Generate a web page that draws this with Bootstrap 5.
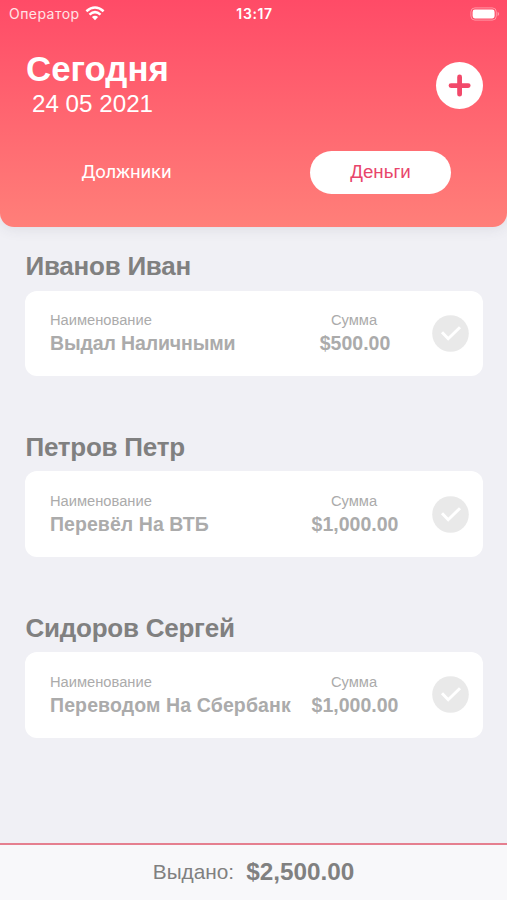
<!DOCTYPE html>
<html lang="ru">
<head>
<meta charset="utf-8">
<meta name="viewport" content="width=device-width, initial-scale=1">
<title>Деньги</title>
<link href="https://cdn.jsdelivr.net/npm/bootstrap@5.3.0/dist/css/bootstrap.min.css" rel="stylesheet">
<style>
body{font-family:"Liberation Sans",Arial,sans-serif;background:#f0f0f5;height:900px;overflow:hidden;line-height:1}
.hero{height:227px;background:linear-gradient(#ff4b67,#ff7f79);border-radius:0 0 14px 14px;box-shadow:0 2px 14px rgba(60,60,80,.1)}
.status{height:27px;padding:0 7px 0 9px;font-family:Inter,sans-serif;font-size:14px}
.status>*{flex:1 1 0}
.carrier{color:#ffe3e6;letter-spacing:.45px}
.clock{font-weight:600;font-size:14px;letter-spacing:.6px}
.heading{height:96px;padding:24px 24px 0 26px}
.today{font-size:34.8px;font-weight:700;line-height:36px}
.date{font-size:24.2px;line-height:34px;padding-left:6px}
.add{width:47px;height:47px;margin-top:11px}
.tabs{padding:28px 56px 0 25px}
.tab{height:43px;font-size:19px;border-radius:22px;color:#fff}
.tab-debt{width:203px;font-family:Roboto,sans-serif;font-size:18.5px;letter-spacing:-.15px}
.tab-money{width:141px;background:#fff;color:#e8456b;font-size:18.7px;padding-bottom:1px}
.entries{padding:25px 24px 0 25px}
.entry{height:180.8px}
.person{font-size:26px;font-weight:700;color:#808080;line-height:28px;margin:0 0 10.6px;padding-left:.5px;letter-spacing:-.24px}
.record{height:85.5px;border:0;border-radius:12px;padding:0 14px 0 25px;color:#ababab}
.caption-line{font-size:14.7px;line-height:19px;padding-top:1px}
.value-line{font-size:19.5px;font-weight:700;line-height:26px;white-space:nowrap}
.v1{letter-spacing:-.12px}
.v2{letter-spacing:.06px}
.v3{letter-spacing:.12px}
.sum{width:106px;margin-right:24px}
.sum .caption-line{margin-left:-2px}
.total{height:57px;background:#f8f8fa;border-top:2px solid #e57f8f;color:#808080}
.total-label{font-size:20.8px}
.total-sum{font-size:24.3px;font-weight:700}
</style>
</head>
<body class="d-flex flex-column">
<header class="hero text-white flex-shrink-0">
  <div class="status d-flex align-items-center">
    <div class="carrier d-flex align-items-center"><span>Оператор</span>
      <svg class="ms-1" width="21" height="15" viewBox="-1 0 21 15" fill="none" stroke="#fff" stroke-width="2.5"><path d="M1.4 5.3Q10-2.2 18.6 5.3M4.5 8.6Q10 3.7 15.5 8.6"/><path d="M10 14.2 6.9 11Q10 8.4 13.1 11Z" fill="#fff" stroke="none"/></svg>
    </div>
    <div class="clock text-center">13:17</div>
    <div class="text-end"><svg width="30" height="14" viewBox="0 0 30 14"><rect x=".9" y=".9" width="25.4" height="12.2" rx="4" fill="none" stroke="#fff" stroke-opacity=".4"/><rect x="2.6" y="2.6" width="22" height="8.8" rx="2.3" fill="#fff"/><path d="M27.6 4.8q3 2.2 0 4.4z" fill="#fff" fill-opacity=".45"/></svg></div>
  </div>
  <div class="heading d-flex justify-content-between align-items-start">
    <div><h1 class="today m-0">Сегодня</h1><div class="date">24 05 2021</div></div>
    <button class="add btn p-0 border-0 rounded-circle bg-white d-flex align-items-center justify-content-center" aria-label="Добавить"><svg width="24" height="24" viewBox="0 0 24 24" stroke="#f2496a" stroke-width="4.8" stroke-linecap="round"><path d="M11.6 3v17.2M3 11.6h17.2"/></svg></button>
  </div>
  <nav class="tabs d-flex justify-content-between">
    <a class="tab tab-debt d-flex align-items-center justify-content-center text-decoration-none">Должники</a>
    <a class="tab tab-money d-flex align-items-center justify-content-center text-decoration-none">Деньги</a>
  </nav>
</header>
<main class="entries flex-grow-1">
  <section class="entry">
    <h2 class="person">Иванов Иван</h2>
    <div class="record card flex-row align-items-center">
      <div class="flex-grow-1"><div class="caption-line">Наименование</div><div class="value-line v1">Выдал Наличными</div></div>
      <div class="sum text-center"><div class="caption-line">Сумма</div><div class="value-line">$500.00</div></div>
      <svg width="37" height="37" viewBox="0 0 37 37"><circle cx="18.5" cy="18.5" r="18.3" fill="#e9e9e9"/><path d="m10 17.3 6.2 6.4L28 12.2" fill="none" stroke="#fff" stroke-width="3"/></svg>
    </div>
  </section>
  <section class="entry">
    <h2 class="person">Петров Петр</h2>
    <div class="record card flex-row align-items-center">
      <div class="flex-grow-1"><div class="caption-line">Наименование</div><div class="value-line v2">Перевёл На ВТБ</div></div>
      <div class="sum text-center"><div class="caption-line">Сумма</div><div class="value-line">$1,000.00</div></div>
      <svg width="37" height="37" viewBox="0 0 37 37"><circle cx="18.5" cy="18.5" r="18.3" fill="#e9e9e9"/><path d="m10 17.3 6.2 6.4L28 12.2" fill="none" stroke="#fff" stroke-width="3"/></svg>
    </div>
  </section>
  <section class="entry">
    <h2 class="person">Сидоров Сергей</h2>
    <div class="record card flex-row align-items-center">
      <div class="flex-grow-1"><div class="caption-line">Наименование</div><div class="value-line v3">Переводом На Сбербанк</div></div>
      <div class="sum text-center"><div class="caption-line">Сумма</div><div class="value-line">$1,000.00</div></div>
      <svg width="37" height="37" viewBox="0 0 37 37"><circle cx="18.5" cy="18.5" r="18.3" fill="#e9e9e9"/><path d="m10 17.3 6.2 6.4L28 12.2" fill="none" stroke="#fff" stroke-width="3"/></svg>
    </div>
  </section>
</main>
<footer class="total flex-shrink-0 d-flex align-items-center justify-content-center">
  <span class="total-label me-2 pe-1">Выдано:</span><span class="total-sum">$2,500.00</span>
</footer>
<script src="https://cdn.jsdelivr.net/npm/bootstrap@5.3.0/dist/js/bootstrap.bundle.min.js"></script>
</body>
</html>
